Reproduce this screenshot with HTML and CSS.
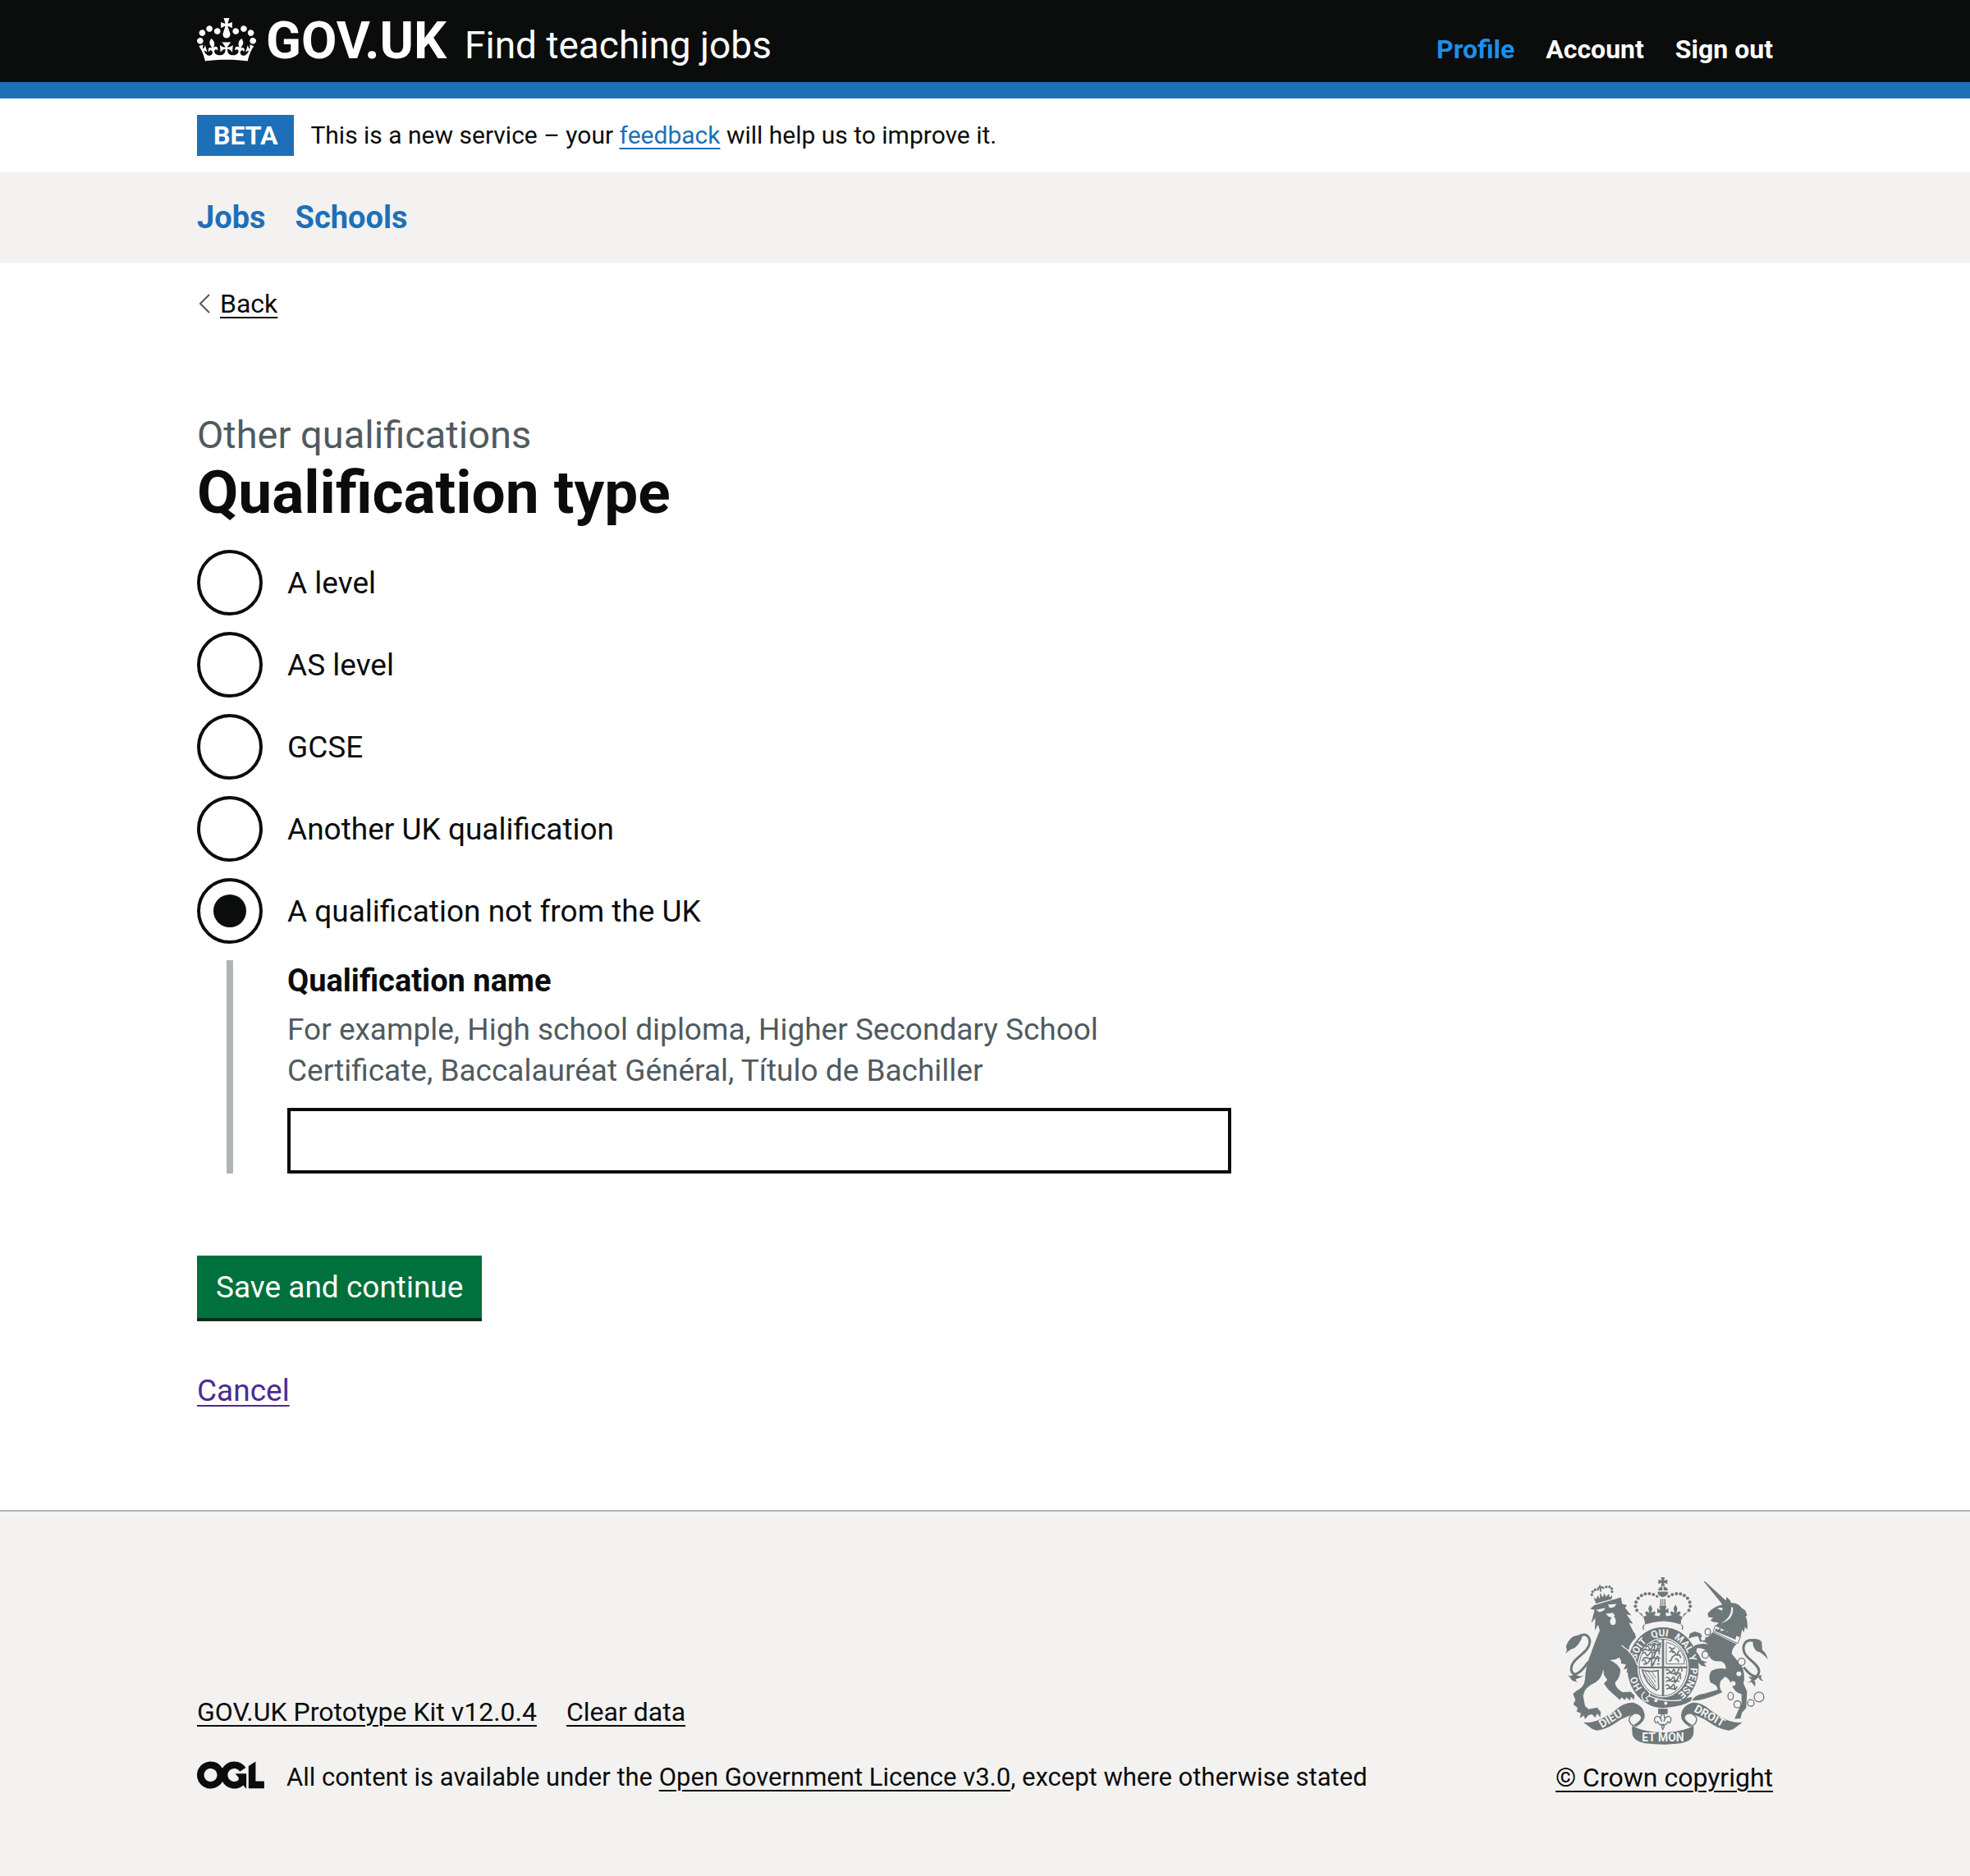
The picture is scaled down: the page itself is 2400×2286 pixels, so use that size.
FILE: index.html
```html
<!DOCTYPE html>
<html lang="en">
<head>
<meta charset="utf-8">
<meta name="viewport" content="width=device-width, initial-scale=1">
<title>Qualification type – Find teaching jobs – GOV.UK</title>
<link rel="stylesheet" href="styles.css">
</head>
<body>
<header class="header">
  <div class="container header-inner">
    <div class="header-brand">
      <a class="logo" href="#">
        <svg class="logo-crown" viewBox="0 0 132 97" aria-hidden="true"><path fill="currentColor" fill-rule="evenodd" d="M25 30.2c3.5 1.5 7.7-.2 9.1-3.7 1.5-3.6-.2-7.8-3.9-9.2-3.6-1.4-7.6.3-9.1 3.9-1.4 3.5.3 7.5 3.9 9zM9 39.5c3.6 1.5 7.8-.2 9.2-3.7 1.5-3.6-.2-7.8-3.9-9.1-3.6-1.5-7.6.2-9.1 3.8-1.4 3.5.3 7.5 3.8 9zM4.4 57.2c3.5 1.5 7.7-.2 9.1-3.8 1.5-3.6-.2-7.7-3.9-9.1-3.5-1.5-7.6.3-9.1 3.8-1.4 3.5.3 7.6 3.9 9.1zm38.3-21.4c3.5 1.5 7.7-.2 9.1-3.8 1.5-3.6-.2-7.7-3.9-9.1-3.6-1.5-7.6.3-9.1 3.8-1.3 3.6.4 7.7 3.9 9.1zm64.4-5.6c-3.6 1.5-7.8-.2-9.1-3.7-1.5-3.6.2-7.8 3.8-9.2 3.6-1.4 7.7.3 9.2 3.9 1.3 3.5-.4 7.5-3.9 9zm15.9 9.3c-3.6 1.5-7.7-.2-9.1-3.7-1.5-3.6.2-7.8 3.7-9.1 3.6-1.5 7.7.2 9.2 3.8 1.5 3.5-.3 7.5-3.8 9zm4.7 17.7c-3.6 1.5-7.8-.2-9.2-3.8-1.5-3.6.2-7.7 3.9-9.1 3.6-1.5 7.7.3 9.2 3.8 1.3 3.5-.4 7.6-3.9 9.1zM89.3 35.8c-3.6 1.5-7.8-.2-9.2-3.8-1.4-3.6.2-7.7 3.9-9.1 3.6-1.5 7.7.3 9.2 3.8 1.4 3.6-.3 7.7-3.9 9.1zM69.7 17.7l8.9 4.7V9.3l-8.9 2.8c-.2-.3-.5-.6-.9-.9L72.4 0H59.6l3.5 11.2c-.3.3-.6.5-.9.9l-8.8-2.8v13.1l8.8-4.7c.3.3.6.7.9.9l-5 15.4v.1c-.2.8-.4 1.6-.4 2.4 0 4.1 3.1 7.5 7 8.1h.2c.3 0 .7.1 1 .1.4 0 .7 0 1-.1h.2c4-.6 7.1-4.1 7.1-8.1 0-.8-.1-1.7-.4-2.4V34l-5.1-15.4c.4-.2.7-.6 1-.9zM66 92.8c16.9 0 32.8 1.1 47.1 3.2 4-16.9 8.9-26.7 14-33.5l-9.6-3.4c1 4.9 1.1 7.2 0 10.2-1.5-1.4-3-4.3-4.2-8.7L108.6 76c2.8-2 5-3.2 7.5-3.3-4.4 9.4-10 11.9-13.6 11.2-4.3-.8-6.3-4.6-5.6-7.9 1-4.7 5.7-5.9 8-.5 4.3-8.7-3-11.4-7.6-8.8 7.1-7.2 7.9-13.5 2.1-21.1-8 6.1-8.1 12.3-4.5 20.8-4.7-5.4-12.1-2.5-9.5 6.2 3.4-5.2 7.9-2 7.2 3.1-.6 4.3-6.4 7.8-13.5 7.2-10.3-.9-10.9-8-11.2-13.8 2.5-.5 7.1 1.8 11 7.3L80.2 60c-4.1 4.4-8 5.3-12.3 5.4 1.4-4.4 8-11.6 8-11.6H55.5s6.4 7.2 7.9 11.6c-4.2-.1-8-1-12.3-5.4l1.4 16.4c3.9-5.5 8.5-7.7 10.9-7.3-.3 5.8-.9 12.8-11.1 13.8-7.2.6-12.9-2.9-13.5-7.2-.7-5 3.8-8.3 7.1-3.1 2.7-8.7-4.6-11.6-9.4-6.2 3.7-8.5 3.6-14.7-4.6-20.8-5.8 7.6-5 13.9 2.2 21.1-4.7-2.6-11.9.1-7.7 8.8 2.3-5.5 7.1-4.2 8.1.5.7 3.3-1.3 7.1-5.7 7.9-3.5.7-9-1.8-13.5-11.2 2.5.1 4.7 1.3 7.5 3.3l-4.7-15.4c-1.2 4.4-2.7 7.2-4.3 8.7-1.1-3-.9-5.3 0-10.2l-9.5 3.4c5 6.9 9.9 16.7 14 33.5 14.8-2.1 30.8-3.2 47.7-3.2z"/></svg>
        <span class="logo-text">GOV.UK</span>
      </a>
      <a class="service-name" href="#">Find teaching jobs</a>
    </div>
    <nav class="header-nav" aria-label="Account">
      <a class="header-link header-link-active" href="#">Profile</a>
      <a class="header-link" href="#">Account</a>
      <a class="header-link" href="#">Sign out</a>
    </nav>
  </div>
</header>

<div class="container phase-banner">
  <strong class="tag">BETA</strong>
  <span>This is a new service – your <a class="link" href="#">feedback</a> will help us to improve it.</span>
</div>

<nav class="primary-nav" aria-label="Primary">
  <div class="container primary-nav-inner">
    <a class="primary-link" href="#">Jobs</a>
    <a class="primary-link" href="#">Schools</a>
  </div>
</nav>

<div class="container page">
  <a class="back-link" href="#">
    <svg class="back-arrow" viewBox="0 0 14 24" aria-hidden="true"><path d="M13 1 2 12l11 11" fill="none" stroke="#505a5f" stroke-width="2"/></svg>
    <span class="back-text">Back</span>
  </a>

  <main class="main">
    <form class="column">
      <fieldset class="fieldset">
        <legend class="legend">
          <span class="caption">Other qualifications</span>
          <h1 class="heading">Qualification type</h1>
        </legend>
        <div class="radios">
          <div class="radio-item"><input class="radio" type="radio" name="type" id="type-1"><label class="radio-label" for="type-1">A level</label></div>
          <div class="radio-item"><input class="radio" type="radio" name="type" id="type-2"><label class="radio-label" for="type-2">AS level</label></div>
          <div class="radio-item"><input class="radio" type="radio" name="type" id="type-3"><label class="radio-label" for="type-3">GCSE</label></div>
          <div class="radio-item"><input class="radio" type="radio" name="type" id="type-4"><label class="radio-label" for="type-4">Another UK qualification</label></div>
          <div class="radio-item"><input class="radio" type="radio" name="type" id="type-5" checked><label class="radio-label" for="type-5">A qualification not from the UK</label></div>
          <div class="conditional">
            <label class="field-label" for="name">Qualification name</label>
            <div class="hint" id="name-hint">For example, High school diploma, Higher Secondary School Certificate, Baccalauréat Général, Título de Bachiller</div>
            <input class="text-input" type="text" id="name" aria-describedby="name-hint">
          </div>
        </div>
      </fieldset>
      <button class="button" type="submit">Save and continue</button>
      <p class="cancel"><a class="link link-visited" href="#">Cancel</a></p>
    </form>
  </main>
</div>

<footer class="footer">
  <div class="container footer-inner">
    <div class="footer-main">
      <div class="footer-links">
        <a class="footer-link" href="#">GOV.UK Prototype Kit v12.0.4</a>
        <a class="footer-link" href="#">Clear data</a>
      </div>
      <div class="licence">
        <svg class="ogl" viewBox="0 0 484 196" role="img" aria-label="Open Government Licence"><path fill="currentColor" d="M421.5 142.8V.1l-50.7 32.3v161.1h112.4v-50.7zm-122.3-9.6A47.12 47.12 0 0 1 221 97.8c0-26 21.1-47.1 47.1-47.1 16.7 0 31.4 8.7 39.7 21.8l42.7-27.2A97.63 97.63 0 0 0 268.1 0c-36.5 0-68.3 20.1-85.1 49.7A98 98 0 0 0 97.8 0C43.9 0 0 43.9 0 97.8s43.9 97.8 97.8 97.8c36.5 0 68.3-20.1 85.1-49.7a97.76 97.76 0 0 0 149.6 25.4l19.4 22.2h3V87.8h-80l24.3 27.5zM97.8 145c-26 0-47.1-21.1-47.1-47.1s21.1-47.1 47.1-47.1 47.1 21.1 47.1 47.1S123.8 145 97.8 145"/></svg>
        <span>All content is available under the <a href="#">Open Government Licence v3.0</a>, except where otherwise stated</span>
      </div>
    </div>
    <a class="copyright" href="#">
      <svg class="crest" viewBox="72 66 750 614" aria-hidden="true">
        <defs>
          <path id="garter" d="M438 512A101 115 0 0 1 337 397A101 115 0 0 1 438 282A101 115 0 0 1 539 397A101 115 0 0 1 438 512"/>
          <g id="crown-half">
            <circle cx="342" cy="187" r="6"/><circle cx="337" cy="172" r="6"/><circle cx="339" cy="157" r="6"/><circle cx="347" cy="143" r="6"/><circle cx="359" cy="133" r="6"/><circle cx="373" cy="127" r="6"/><circle cx="388" cy="126" r="6"/><circle cx="403" cy="129" r="6"/><circle cx="416" cy="136" r="5"/>
            <path d="M346 193l14 6 6 12 12-6-6-8 4-7 12 6-4-16 7-14 8 14-4 16 12-6 4 7-6 8 18 4 6-8-6-6-6 4v-20l8 6h3l-4-14 14 0v56q-34 1-66 12 0-14-6-26z"/>
            <path d="M428 146h4v28h-4zM436 146h2v28h-2z"/>
          </g>
          <g id="ribbon-half">
            <path d="M146 598C190 602 225 580 262 554Q296 524 330 526Q368 538 371 570Q372 596 342 612L332 606Q362 590 356 576Q348 564 330 568L314 574Q285 584 262 602Q225 626 195 628Q180 626 170 616Z"/>
            <path d="M330 568Q312 574 314 592Q320 612 342 612" fill="none" stroke="currentColor" stroke-width="4"/>
            <path d="M312 584Q330 612 324 618L326 645Q334 668 372 675Q404 679 438 679V635Q370 634 328 612Z"/>
          </g>
        </defs>
        <g fill="currentColor">
          <!-- lion -->
          <circle cx="177" cy="130" r="5"/><circle cx="180" cy="119" r="5"/><circle cx="189" cy="112" r="5"/><circle cx="199" cy="111" r="4"/><circle cx="219" cy="105" r="4"/><circle cx="230" cy="101" r="5"/><circle cx="242" cy="101" r="5"/><circle cx="250" cy="108" r="5"/><circle cx="251" cy="119" r="5"/>
          <path d="M184 140l10 6 4-14 8 12 2-22 8 18 8-16 4 14 12-12 2 14 10-8-2 14-58 16z"/>
          <path d="M197 102l7-1-1-6 6-1 1 6 7-1 1 6-7 1 2 12-6 1-2-12-7 1z"/>
          <path d="M186 168L284 140L288 164L306 168L299 178L322 206L304 202L328 236L313 233L330 266Q340 276 338 288Q314 310 312 334L290 322Q318 345 340 380L346 396L338 400L342 416L332 407L327 424L320 408L307 416L311 399L296 402L305 386L289 381L300 366L283 371L278 360Q258 372 242 369Q272 382 282 405Q280 436 262 452Q264 474 290 487L320 486L334 500L331 516L320 505L317 518L304 506L298 516L286 506L280 516L262 500L238 478L221 456L234 442L222 425L219 403Q214 436 190 452Q150 468 145 500L152 538L165 550L196 544L210 560L208 580L197 566L189 581L178 569L165 572L152 587L148 573L133 582L137 565L121 558L125 545L109 532L117 516L108 494L118 484Q150 470 152 440Q154 390 172 350Q190 300 206 262L200 240L188 262L190 215L175 234L187 186L171 182Z"/>
          <path d="M72 356Q92 338 82 320Q96 280 128 279L142 284Q132 312 112 326Q90 332 72 356Z"/>
          <path d="M130 282C165 262 180 300 160 328C140 356 96 372 102 408C110 438 140 412 164 376" fill="none" stroke="currentColor" stroke-width="9"/>
          <path d="M88 424Q104 434 114 418Q130 436 150 424Q136 436 118 440Q118 448 128 450Q100 448 98 434Z"/>
          <!-- unicorn -->
          <path d="M587 81l5 0L674 156l-18 10Z"/>
          <path d="M655 166L668 152L671 138L684 150L688 160Q715 160 725 177L740 188L747 208L740 208Q750 225 747 258L738 248L735 268L728 258L722 286L630 244L642 232L622 230L612 224L622 214L604 212L602 198Q625 172 655 166Z"/>
          <path d="M630 243L722 286L712 309L622 265Z" fill="#f3f2f1" stroke="currentColor" stroke-width="3"/>
          <path d="M628 263l4-10 8 6 8-8 2 12 12-2 8-6 2 12 12-2 8-2 2 12 10 0 4-2-4 22z"/>
          <path d="M620 268L708 311Q690 325 690 347Q710 370 730 398Q740 430 733 455L746 484L743 545L728 562L722 584L700 585L712 558L726 528V495Q700 488 690 462Q680 436 666 430L650 445Q640 470 655 488Q605 510 570 517L544 518Q560 494 590 493L638 478Q640 462 612 452Q602 425 616 408Q640 396 668 402Q670 382 650 374Q610 378 604 345Q590 322 562 326L560 340Q572 350 578 370L600 378L588 382L598 394L580 390L560 374L544 332L554 316Q580 306 604 312Q590 300 574 302L566 282L545 286L532 292L536 272L556 265L576 272L584 288L604 284Z"/>
          <path d="M752 294Q790 286 800 304L802 332Q818 345 822 367Q800 340 782 338Q766 322 768 304Z"/>
          <path d="M772 300C742 288 724 316 738 346C752 370 792 388 790 412C786 442 760 430 734 396" fill="none" stroke="currentColor" stroke-width="9"/>
          <path d="M806 444Q794 450 788 432Q770 454 746 452Q762 448 762 440L750 432L780 430L800 424Q792 440 806 444ZM776 446l0 22-14-18z"/>
          <g fill="#f3f2f1" stroke="currentColor" stroke-width="4">
            <ellipse cx="602" cy="266" rx="10" ry="12"/><ellipse cx="593" cy="350" rx="12" ry="13"/><circle cx="726" cy="376" r="13"/><ellipse cx="686" cy="502" rx="10" ry="14"/><circle cx="711" cy="532" r="13"/><circle cx="760" cy="527" r="12"/><circle cx="790" cy="505" r="18"/>
          </g>
          <g fill="#f3f2f1">
            <circle cx="585" cy="290" r="8"/><circle cx="716" cy="420" r="9"/><circle cx="695" cy="456" r="9"/>
            <path d="M636 182q10-8 22-2l-4 4 2 6-10-6z"/>
            <path d="M688 176Q690 215 648 236Q700 222 694 176Z"/>
            <path d="M192 186l36-8-8 10-14 6zM236 166l32-2-10 12-16 2zM228 200l26-4 8 10-4 4q12 14 4 28-12 8-18-4-2-12 6-20l-12-4z"/>
          </g>
          <!-- garter and shield -->
          <ellipse cx="438" cy="397" rx="131" ry="148"/>
          <ellipse cx="438" cy="397" rx="94" ry="109" fill="#f3f2f1"/>
          <ellipse cx="438" cy="397" rx="88" ry="104" fill="none" stroke="currentColor" stroke-width="3"/>
          <path d="M434 292h8v208h-8zM350 393h176v7H350z"/>
          <g fill="none" stroke="currentColor" stroke-width="5">
            <path d="M372 322q10-12 14 2t14-4 6 12 12-8 8 4M384 310l10 6 12-8 12 6 10-8M362 346q10-10 14 2t14-4 8 10 12-10 14 6M360 336l12-6 14 4 16-2 14 4 12-2M360 374q10-12 14 2t14-4 8 8 12-8 14 4M364 364l12-4 12 4 14-4 14 4 12-2M366 384h12M396 384h12M416 384h10M404 300l18 4"/>
            <path d="M448 408q8-8 14 2t12-2 8 8 12-8 14 4M450 420l14-4 12 4 14-4 14 4M448 436q8-8 12 2t12-2 8 8 12-8 10 4M448 448l12-4 12 4 14-4 12 4M448 464q8-8 12 2t12-2 8 6 10-4M450 476l12-4 12 4 10-4"/>
            <path d="M450 306v78h66v-30" stroke-width="3"/><path d="M450 304Q500 316 514 356" stroke-width="3"/>
            <path d="M460 322l12 8 10-6M462 340q14-8 20 4t16 6l6 12M484 350l-12 8-4 12-8 4M482 364l10 4 4 10M468 330l8 14M500 336q-10 2-8 14" stroke-width="5"/>
            <path d="M362 406q24 8 58 2l2 66-8 6q-40-22-52-74z" stroke-width="5"/><path d="M372 412l40 56M384 412l28 40M396 412l16 24M366 418l44 56" stroke-width="3"/>
          </g>
          <path d="M350 490Q430 530 545 505L540 520Q500 545 430 542Q380 535 355 510Z"/>
          <path d="M384 500Q440 526 506 516M372 486q-16 8-10 24 6 14 22 10l-8-12 10-6q8-10-2-18" fill="none" stroke="#f3f2f1" stroke-width="4"/>
          <circle cx="412" cy="518" r="6" fill="#f3f2f1"/><circle cx="448" cy="528" r="6" fill="#f3f2f1"/>
          <g class="motto" fill="#f3f2f1">
            <text><textPath href="#garter" startOffset="13%">HO</textPath></text>
            <text><textPath href="#garter" startOffset="29%">SOIT</textPath></text>
            <text><textPath href="#garter" startOffset="44%">QUI</textPath></text>
            <text><textPath href="#garter" startOffset="56%">MAL Y</textPath></text>
            <text><textPath href="#garter" startOffset="75%">PENSE</textPath></text>
          </g>
          <!-- the lion's forepaw overlaps the garter -->
          <path d="M286 316Q330 345 342 384L346 398L338 402L342 418L330 410L325 428L318 412L304 416L308 401L294 402L302 386L284 382Z"/>
          <path d="M286 316Q330 345 344 388" fill="none" stroke="#f3f2f1" stroke-width="4"/>
          <!-- crown -->
          <path d="M366 262Q362 246 378 240H496Q512 246 508 262Q437 236 366 262Z" fill="#f3f2f1"/>
          <path d="M368 258Q360 250 370 240M507 258Q515 250 505 240" fill="none" stroke="currentColor" stroke-width="4"/>
          <use href="#crown-half"/><use href="#crown-half" transform="matrix(-1 0 0 1 875 0)"/>
          <path d="M430 66h15l-4 12 13-4v16l-13-4 4 12h-15l4-12-13 4V74l13 4zM420 114q2-12 16-14v14zM440 100q14 2 16 14h-16zM418 119h39q0 16-20 20-19-4-19-20z"/>
          <!-- ribbon -->
          <path d="M420 548h35v20h-35z"/>
          <path d="M437 562q12 16 4 34 4-22 20-20 12 8 2 24l-8-4q-4 12-18 14-14-2-18-14l-8 4q-10-16 2-24 16-2 20 20-8-18 4-34zM430 606h14M432 612l5 12 6-12" fill="#f3f2f1" stroke="currentColor" stroke-width="4"/>
          <use href="#ribbon-half"/><use href="#ribbon-half" transform="matrix(-1 0 0 1 875 0)"/>
          <g class="ribbon-text" fill="#f3f2f1">
            <text transform="translate(214 620) rotate(-31)">DIEU</text>
            <text transform="translate(549 557) rotate(29)">DROIT</text>
            <text x="438" y="668" text-anchor="middle">ET MON</text>
          </g>
        </g>
      </svg>
      <span class="copyright-text">© Crown copyright</span>
    </a>
  </div>
</footer>
</body>
</html>
```

FILE: styles.css
```css
* { box-sizing: border-box; }

body {
  margin: 0;
  background: #fff;
  color: #0b0c0c;
  font-family: Roboto, Arial, sans-serif;
  font-size: 37px;
  line-height: 50px;
}

a {
  color: inherit;
  text-decoration-thickness: 2px;
  text-underline-offset: 5px;
}

.container {
  width: 80%;
  max-width: 1920px;
  margin: 0 auto;
}

/* Header */
.header {
  background: #0b0c0c;
  border-bottom: 20px solid #1d70b8;
  color: #fff;
}
.header-inner {
  display: flex;
  justify-content: space-between;
  align-items: center;
  min-height: 100px;
}
.header-brand {
  display: flex;
  align-items: baseline;
  gap: 22px;
}
.logo {
  display: flex;
  align-items: baseline;
  gap: 12px;
  text-decoration: none;
}
.logo-crown {
  align-self: center;
  width: 72px;
  height: 53px;
  margin-bottom: 4px;
}
.logo-text {
  font-size: 63px;
  line-height: 60px;
  font-weight: 700;
}
.service-name {
  font-size: 46px;
  text-decoration: none;
}
.header-nav {
  display: flex;
  gap: 38px;
  padding-top: 20px;
}
.header-link {
  font-size: 32px;
  line-height: 40px;
  font-weight: 700;
  text-decoration: none;
}
.header-link-active { color: #1d8feb; }

/* Phase banner */
.phase-banner {
  display: flex;
  align-items: center;
  gap: 20px;
  padding: 20px 0;
  font-size: 30px;
  line-height: 40px;
}
.tag {
  padding: 5px 20px;
  background: #1d70b8;
  color: #fff;
  font-size: 32px;
  font-weight: 700;
}
.link { color: #1d70b8; }
.link-visited { color: #4c2c92; }

/* Primary navigation */
.primary-nav { background: #f3f2f1; }
.primary-nav-inner {
  display: flex;
  gap: 36px;
  padding: 30px 0;
}
.primary-link {
  color: #1d70b8;
  font-size: 38px;
  font-weight: 700;
  text-decoration: none;
}

/* Page */
.page { padding: 30px 0 120px; }
.back-link {
  display: flex;
  align-items: center;
  gap: 12px;
  width: fit-content;
  padding-left: 2px;
  font-size: 32px;
  line-height: 40px;
  text-decoration: none;
}
.back-arrow { width: 14px; height: 24px; }
.back-text {
  text-decoration: underline;
  text-decoration-thickness: 2px;
  text-underline-offset: 5px;
}
.main { padding-top: 110px; }
.column { max-width: 1260px; }
.fieldset {
  margin: 0;
  padding: 0;
  border: 0;
}
.legend {
  padding: 0;
  margin-bottom: 30px;
}
.caption {
  display: block;
  color: #505a5f;
  font-size: 47px;
  line-height: 60px;
}
.heading {
  margin: 0;
  font-size: 73px;
  line-height: 80px;
  font-weight: 700;
}
.radios {
  display: flex;
  flex-direction: column;
  gap: 20px;
}
.radio-item {
  display: flex;
  align-items: center;
  gap: 30px;
}
.radio-label { padding-top: 2px; }
.radio {
  appearance: none;
  display: grid;
  place-items: center;
  flex: none;
  width: 80px;
  height: 80px;
  margin: 0;
  border: 4px solid #0b0c0c;
  border-radius: 50%;
  background: #fff;
}
.radio:checked::before {
  content: "";
  width: 40px;
  height: 40px;
  border-radius: 50%;
  background: #0b0c0c;
}
.conditional {
  margin-left: 36px;
  padding-left: 66px;
  border-left: 8px solid #b1b4b6;
}
.field-label {
  display: block;
  margin-bottom: 10px;
  font-size: 38px;
  font-weight: 700;
}
.hint {
  max-width: 1060px;
  margin-bottom: 20px;
  color: #505a5f;
}
.text-input {
  display: block;
  width: 100%;
  height: 80px;
  padding: 10px;
  border: 4px solid #0b0c0c;
  border-radius: 0;
  font: inherit;
}
.button {
  display: block;
  margin: 100px 0 64px;
  padding: 14px 23px 12px;
  border: 0;
  background: #00703c;
  box-shadow: 0 4px 0 #002d18;
  color: #fff;
  font: inherit;
}
.cancel { margin: 0; }

/* Footer */
.footer {
  padding: 80px 0 100px;
  background: #f3f2f1;
  border-top: 2px solid #b1b4b6;
  font-size: 31px;
  line-height: 40px;
}
.footer-inner {
  display: flex;
  justify-content: space-between;
  align-items: flex-end;
}
.footer-main {
  display: flex;
  flex-direction: column;
  gap: 40px;
}
.footer-links {
  display: flex;
  gap: 36px;
  font-size: 32px;
}
.licence {
  display: flex;
  align-items: flex-start;
  gap: 27px;
}
.ogl {
  flex: none;
  width: 82px;
  height: 34px;
}
.copyright {
  display: flex;
  flex-direction: column;
  align-items: flex-end;
  gap: 20px;
  font-size: 32px;
}
.crest {
  width: 250px;
  height: 204px;
  margin-right: 6px;
  color: #6e777a;
}
.motto {
  font-size: 36px;
  font-weight: 700;
}
.ribbon-text {
  font-size: 42px;
  font-weight: 700;
}
```
